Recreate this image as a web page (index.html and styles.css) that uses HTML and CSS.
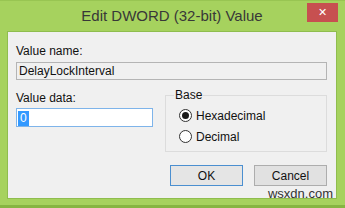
FILE: index.html
```html
<!DOCTYPE html>
<html lang="en">

<head>
  <meta charset="UTF-8" />
  <title>Edit DWORD (32-bit) Value</title>
  <link rel="stylesheet" href="styles.css">
</head>

<body>
  <div class="window">
    <div class="titlebar">
      <span></span>
      <p class="title">Edit DWORD (32-bit) Value</p>
      <span class="close">&#x2715;</span>
    </div>

    <div class="client">
      <p class="label">Value name:</p>
      <div class="field readonly">DelayLockInterval</div>

      <div class="row">
        <div class="data">
          <p class="label">Value data:</p>
          <div class="field edit"><span class="sel">0</span></div>
        </div>

        <fieldset class="base">
          <legend>Base</legend>
          <label class="radio"><input type="radio" name="base" checked> Hexadecimal</label>
          <label class="radio"><input type="radio" name="base"> Decimal</label>
        </fieldset>
      </div>

      <div class="buttons">
        <button class="btn default">OK</button>
        <button class="btn">Cancel</button>
      </div>
    </div>

    <!-- watermark -->
    <span class="mark">wsxdn.com</span>
  </div>
</body>

</html>
```

FILE: styles.css
```css
body {
  margin: 0;
  padding: 0;
  width: 345px;
  height: 208px;
  overflow: hidden;
  background: #a6d25e;
  font-family: "Liberation Sans", Arial, sans-serif;
  font-size: 12px;
  color: #111;
}

p {
  margin: 0;
}

/* 窗口外框 */
.window {
  position: relative;
  width: 345px;
  height: 208px;
  box-sizing: border-box;
  padding: 0 8px 0 7px;
  background: #a6d25e;
  border-top: 1px solid #98c552;
  border-bottom: 3px solid #86b542;
}

.titlebar {
  display: grid;
  grid-template-columns: 1fr auto 1fr;
  align-items: start;
  height: 30px;
}

.title {
  padding-top: 5px;
  font-size: 15px;
  line-height: 20px;
  color: #383838;
}

.close {
  justify-self: end;
  width: 31px;
  height: 19px;
  margin: 2px -1px 0 0;
  background: #c75050;
  color: #fff;
  font-size: 11px;
  line-height: 19px;
  text-align: center;
}

/* 对话框内容 */
.client {
  height: 168px;
  box-sizing: border-box;
  padding: 12px 9px 0 8px;
  background: #f0f0f0;
  border: 1px solid #8fbd4e;
}

.label {
  line-height: 15px;
}

.field {
  box-sizing: border-box;
  border: 1px solid #b4b4b4;
  line-height: 16px;
  padding: 0 2px;
}

.readonly {
  height: 18px;
  margin-top: 3px;
  background: #f0f0f0;
}

.row {
  display: flex;
  gap: 12px;
  margin-top: 9px;
}

.data {
  width: 137px;
  padding-top: 2px;
}

.edit {
  height: 19px;
  margin-top: 2px;
  background: #fff;
  border-color: #7eb4ea;
  padding: 1px 1px;
}

.sel {
  display: inline-block;
  padding: 0 2px;
  background: #3399ff;
  color: #fff;
  line-height: 15px;
}

/* 进制选择 */
.base {
  flex: 1;
  margin: 0;
  padding: 3px 0 4px 13px;
  border: 1px solid #dcdcdc;
  height: 63px;
  box-sizing: border-box;
}

.base legend {
  padding: 0 1px;
  margin-left: -5px;
  line-height: 13px;
}

.radio {
  display: flex;
  align-items: center;
  gap: 4px;
  height: 21px;
}

.radio input {
  appearance: none;
  margin: 0;
  width: 13px;
  height: 13px;
  border: 1px solid #333;
  border-radius: 50%;
  background: #fff;
  box-sizing: border-box;
  display: grid;
  place-items: center;
}

.radio input:checked::after {
  content: "";
  width: 7px;
  height: 7px;
  border-radius: 50%;
  background: #1a1a1a;
}

/* 按钮 */
.buttons {
  display: flex;
  justify-content: flex-end;
  gap: 11px;
  margin-top: 13px;
}

.btn {
  width: 73px;
  height: 21px;
  padding: 0;
  font: inherit;
  color: #111;
  background: #e1e1e1;
  border: 1px solid #adadad;
}

.btn.default {
  background: #e5e5e5;
  border-color: #4b8fd0;
}

.mark {
  position: absolute;
  right: 12px;
  bottom: 4px;
  font-size: 13px;
  line-height: 14px;
  color: #333;
}
```
